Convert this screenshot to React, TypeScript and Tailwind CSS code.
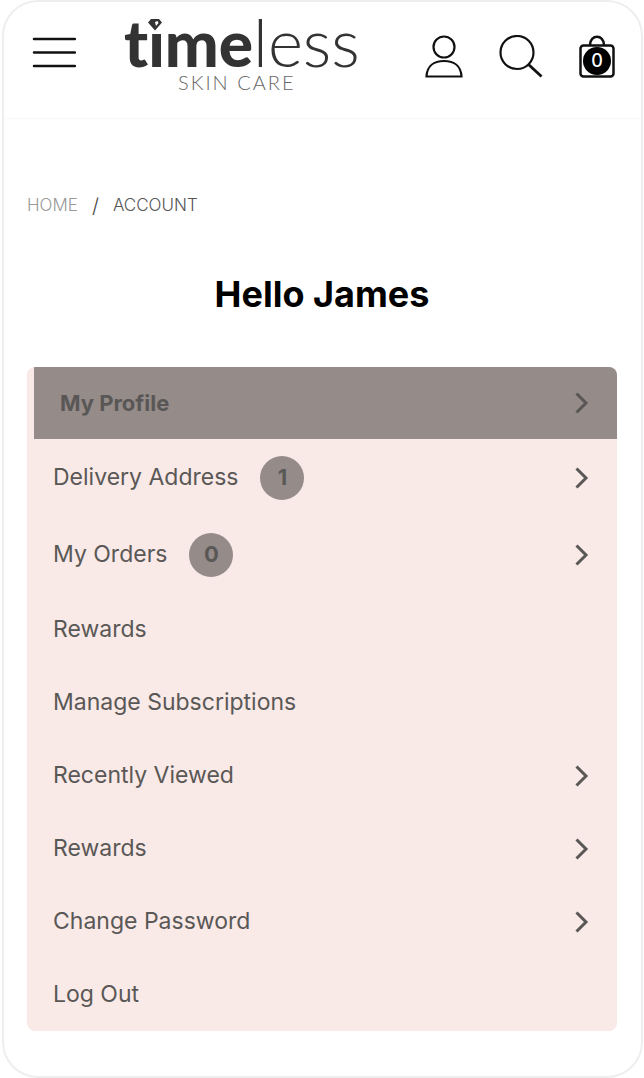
type MenuItem = {
  label: string;
  count?: number;
  arrow?: boolean;
};

const MENU: MenuItem[] = [
  { label: "Delivery Address", count: 1, arrow: true },
  { label: "My Orders", count: 0, arrow: true },
  { label: "Rewards" },
  { label: "Manage Subscriptions" },
  { label: "Recently Viewed", arrow: true },
  { label: "Rewards", arrow: true },
  { label: "Change Password", arrow: true },
  { label: "Log Out" },
];

function Arrow() {
  return (
    <svg
      viewBox="0 0 14 22"
      className="ml-auto h-[22px] w-[14px] shrink-0"
      fill="none"
      stroke="currentColor"
      strokeWidth="3"
      aria-hidden="true"
    >
      <path d="M1.5 1.5 L11 11 L1.5 20.5" />
    </svg>
  );
}

function Logo() {
  return (
    <svg
      viewBox="0 0 248 100"
      className="h-[100px] w-[248px]"
      fill="#333333"
      role="img"
      aria-label="timeless skin care"
    >
      <text x="0" y="65" className="font-['Lato',sans-serif] [font-variant-ligatures:none]">
        <tspan className="text-[64px] font-black">time</tspan>
        <tspan className="text-[67px] font-light">less</tspan>
      </text>
      {/* diamond in place of the dot */}
      <rect x="25" y="12" width="16" height="18" fill="#ffffff" />
      <path d="M27 17 H35 L38 20.500 L31 28.500 L24 20.500 Z" />
      <path d="M31 20 L33.500 19 L34.500 21 L32 24 Z" fill="#ffffff" />
      <text
        x="54"
        y="88"
        fill="#666666"
        className="font-['Lato',sans-serif] text-xl font-light tracking-widest"
      >
        SKIN CARE
      </text>
    </svg>
  );
}

function Header() {
  return (
    <header className="flex h-[117px] items-start border-b border-[#f8f8f8] pr-[26px] pl-7">
      <button type="button" aria-label="Menu" className="mt-[35px]">
        <svg
          viewBox="0 0 44 32"
          className="h-8 w-11"
          stroke="#111111"
          strokeWidth="2.5"
          strokeLinecap="round"
        >
          <path d="M2 2 H43 M2 15.500 H43 M2 29 H43" />
        </svg>
      </button>

      <a href="#home" className="ml-12">
        <Logo />
      </a>

      <div className="mt-[33px] ml-auto flex gap-9">
        <a href="#account" aria-label="Account">
          <svg
            viewBox="0 0 38 44"
            className="h-11 w-[38px]"
            fill="none"
            stroke="#111111"
            strokeWidth="2.200"
          >
            <circle cx="19" cy="12" r="10.500" />
            <path d="M1.500 41.500 C2 31 9 26 19 26 C29 26 36 31 36.500 41.500 Z" />
          </svg>
        </a>
        <button type="button" aria-label="Search">
          <svg
            viewBox="0 0 44 44"
            className="size-11"
            fill="none"
            stroke="#111111"
            strokeWidth="2.200"
          >
            <circle cx="18" cy="17.500" r="16.500" />
            <path d="M29.500 29.500 L42.500 41.500" strokeWidth="2.800" />
          </svg>
        </button>
        <a href="#bag" aria-label="Bag" className="relative">
          <svg
            viewBox="0 0 36 44"
            className="h-11 w-9"
            fill="none"
            stroke="#111111"
            strokeWidth="2.500"
          >
            <rect x="1.500" y="10.500" width="33" height="31" rx="3" />
            <path d="M11 10 C11 -1 25 -1 25 10" />
          </svg>
          <span className="absolute top-3 left-1 flex size-7 items-center justify-center rounded-full bg-black text-lg font-medium text-white">
            0
          </span>
        </a>
      </div>
    </header>
  );
}

export default function App() {
  return (
    <div className="bg-white font-['Inter',sans-serif]">
      <div className="mr-px ml-0.5 overflow-hidden rounded-[36px] border-2 border-[#eeeeee] bg-white">
        <Header />

        <main className="pt-[71px] pr-6 pb-[45px] pl-[23px]">
          <nav aria-label="Breadcrumb" className="flex h-8 items-center text-[17px] font-light">
            <a href="#home" className="text-[#999999]">
              HOME
            </a>
            <span className="mx-[14px] text-xl text-[#444444]">/</span>
            <a href="#account" className="text-[#555555]">
              ACCOUNT
            </a>
          </nav>

          <h1 className="mt-12 text-center text-[36px] leading-[48px] font-bold text-black">
            Hello James
          </h1>

          <nav
            aria-label="Account"
            className="mt-[49px] overflow-hidden rounded-lg bg-[#f9e9e7] text-[23px] text-[#5a5856]"
          >
            <a
              href="#profile"
              className="ml-[7px] flex h-[72px] items-center bg-[#958b89] pr-7 pl-[26px] text-[22px] font-bold text-[#595756]"
            >
              My Profile
              <Arrow />
            </a>
            {MENU.map((item, i) => (
              <a
                key={i}
                href="#account"
                className={
                  item.count !== undefined
                    ? "flex h-[77px] items-center pr-7 pl-[26px]"
                    : "flex h-[73px] items-center pr-7 pl-[26px]"
                }
              >
                {item.label}
                {item.count !== undefined && (
                  <span className="ml-[22px] flex size-11 items-center justify-center rounded-full bg-[#958b89] text-[22px] font-bold">
                    {item.count}
                  </span>
                )}
                {item.arrow && <Arrow />}
              </a>
            ))}
          </nav>
        </main>
      </div>
    </div>
  );
}
